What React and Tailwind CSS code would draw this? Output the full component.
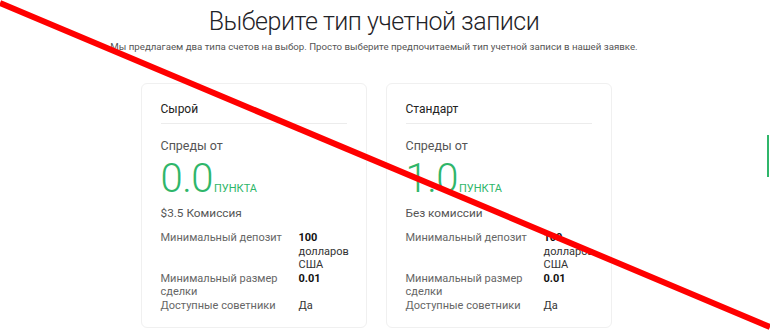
import React from "react";

const accounts = [
  {
    name: "Сырой",
    spread: "0.0",
    commission: "$3.5 Комиссия",
  },
  {
    name: "Стандарт",
    spread: "1.0",
    commission: "Без комиссии",
  },
];

const AccountCard = ({ account }) => (
  <div className="w-[226px] h-[245px] rounded-md border border-[#f0f0f0] bg-white px-[19px] pt-[17px]">
    <div className="text-[12px] leading-[16px] text-[#222] pb-[6px] border-b border-[#ececec]">{account.name}</div>
    <div className="mt-[13px] text-[12.5px] leading-[18px] text-[#555]">Спреды от</div>
    <div className="flex items-baseline text-[#2fb66a] mt-[4px] h-[40px]">
      <span className="text-[40px] leading-[40px] font-light tracking-[-0.5px]">{account.spread}</span>
      <span className="text-[11px] ml-[1px]">ПУНКТА</span>
    </div>
    <div className="mt-[6px] text-[11.8px] leading-[16px] text-[#555]">{account.commission}</div>
    <div className="mt-[10px] grid grid-cols-[138px_1fr] text-[11px] leading-[13.5px] text-[#666]">
      <div>Минимальный депозит</div>
      <div className="text-[#333]">
        <span className="font-bold text-[#111]">100</span>
        <br />
        долларов
        <br />
        США
      </div>
      <div>
        Минимальный размер
        <br />
        сделки
      </div>
      <div className="font-bold text-[#111]">0.01</div>
      <div>Доступные советники</div>
      <div className="text-[#333]">Да</div>
    </div>
  </div>
);

export default function App() {
  return (
    <div className="relative w-[770px] h-[330px] overflow-hidden bg-white font-['Roboto',sans-serif]">
      <div className="w-[748px] flex flex-col items-center">
        <h1 className="mt-[5px] text-[25px] leading-[34px] tracking-[-0.5px] font-light text-[#1f2328]">
          Выберите тип учетной записи
        </h1>
        <p className="mt-[1px] text-[9.7px] leading-[14px] text-[#555]">
          Мы предлагаем два типа счетов на выбор. Просто выберите предпочитаемый тип учетной записи в нашей заявке.
        </p>
        <div className="mt-[29px] ml-[4px] flex gap-[19px]">
          {accounts.map((account) => (
            <AccountCard key={account.name} account={account} />
          ))}
        </div>
      </div>
      <div className="absolute left-[767px] top-[135px] w-[2px] h-[42px] bg-[#2fb66a]" />
      <svg className="absolute inset-0 pointer-events-none" width="770" height="330" viewBox="0 0 770 330">
        <line x1="0" y1="3" x2="770" y2="327" stroke="#ff0000" strokeWidth="6" />
      </svg>
    </div>
  );
}
